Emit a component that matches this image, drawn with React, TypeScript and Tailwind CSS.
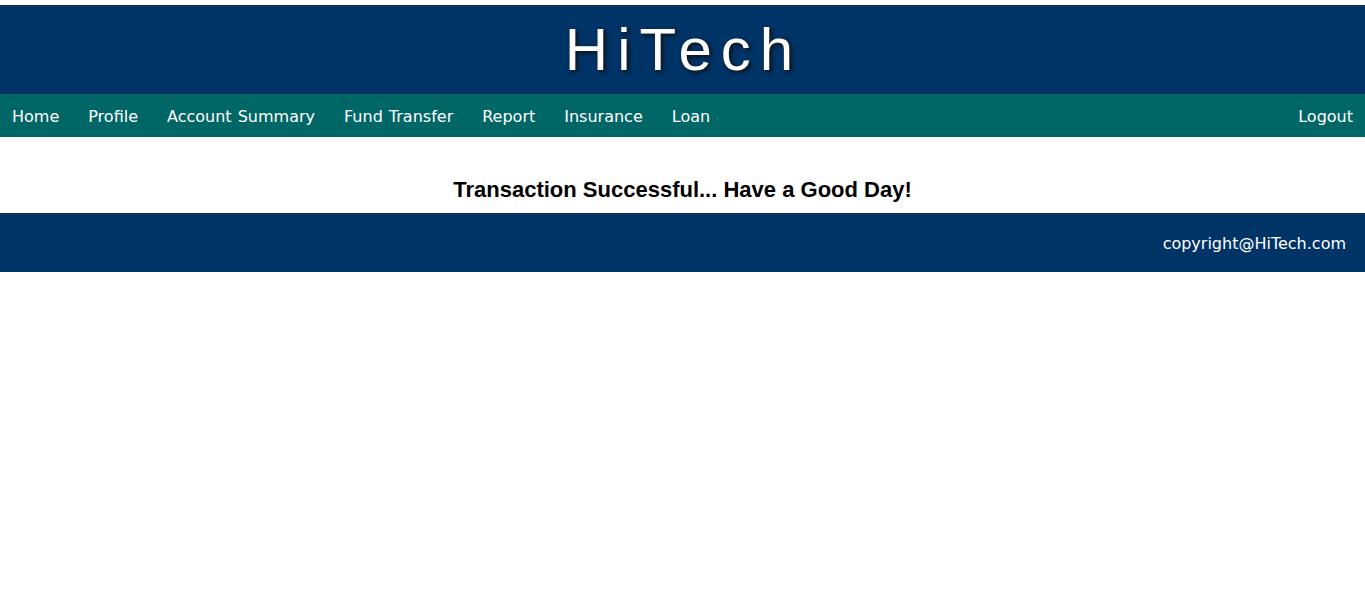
const navLinks = [
  "Home",
  "Profile",
  "Account Summary",
  "Fund Transfer",
  "Report",
  "Insurance",
  "Loan",
];

const App = () => {
  return (
    <div className="min-h-screen bg-white pt-[5px]">
      <header className="bg-[#003366] py-[10px] text-center">
        <h1 className="text-[60px] leading-[69px] tracking-[9px] pl-[2px] text-white font-['Liberation_Sans',Arial,sans-serif] [text-shadow:2px_2px_4px_#111]">
          HiTech
        </h1>
      </header>

      <nav className="bg-[#006666] h-[43px] flex items-center justify-between px-3 pt-[2px] font-['DejaVu_Sans',Verdana,sans-serif] text-[16px] text-white">
        <ul className="flex gap-[29px]">
          {navLinks.map((link) => (
            <li key={link}>
              <a href="#" className="hover:underline [word-spacing:1px]">
                {link}
              </a>
            </li>
          ))}
        </ul>
        <a href="#" className="hover:underline">
          Logout
        </a>
      </nav>

      <main className="h-[76px] pt-[40px] text-center">
        <h2 className="text-[22px] leading-[25px] font-bold text-black font-['Liberation_Sans',Arial,sans-serif]">
          Transaction Successful... Have a Good Day!
        </h2>
      </main>

      <footer className="bg-[#003366] h-[59px] flex items-center justify-end pr-[19px] pt-[2px] font-['DejaVu_Sans',Verdana,sans-serif] text-[16px] text-white">
        copyright@HiTech.com
      </footer>
    </div>
  );
};

export default App;
